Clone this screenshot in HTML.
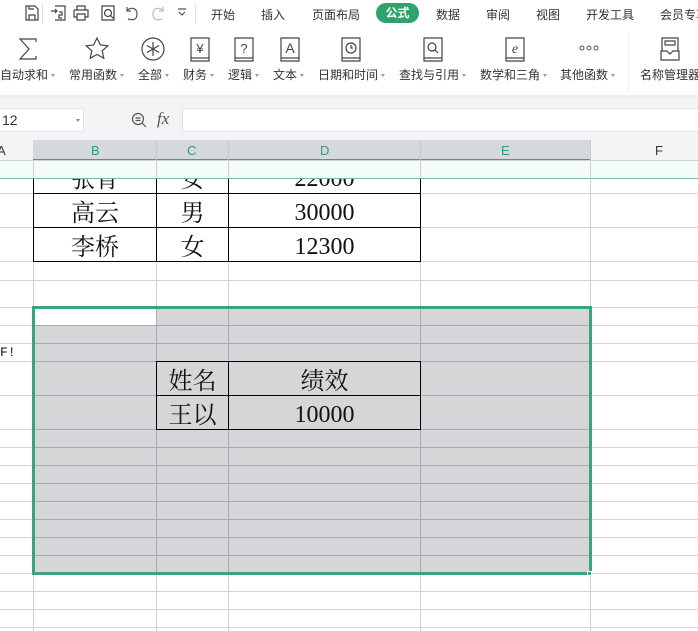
<!DOCTYPE html>
<html><head><meta charset="utf-8">
<style>
*{margin:0;padding:0;box-sizing:border-box}
body{width:698px;height:631px;overflow:hidden;background:#fff;font-family:"Liberation Sans","Noto Sans CJK SC",sans-serif;position:relative;color:#333}
.a{position:absolute}
.tab{position:absolute;top:6px;font-size:12px;color:#333;white-space:nowrap}
.lbl{position:absolute;top:66px;font-size:12px;color:#333;white-space:nowrap}
.lbl i{display:inline-block;width:0;height:0;border-left:2.5px solid transparent;border-right:2.5px solid transparent;border-top:3px solid #999;margin-left:3px;vertical-align:middle}
.hl{position:absolute;height:1px;background:#d4d4d4}
.vl{position:absolute;width:1px;background:#d0d0d0}
.cell{position:absolute;border:1px solid #000;font-family:"Liberation Serif","Noto Serif CJK SC",serif;font-size:24px;color:#111;display:flex;align-items:center;justify-content:center;overflow:hidden}
.n{padding-top:6px}
svg{position:absolute;overflow:visible}
</style></head><body>
<!-- top bar -->
<div class="a" style="left:42px;top:4px;width:1px;height:20px;background:#e3e3e3"></div>
<svg style="left:24px;top:5px" width="16" height="16" fill="none" stroke="#444" stroke-width="1.2"><path d="M2 1h9l3 3v11H2z M5 15v-5h6v5 M5 1v3h5"/></svg>
<svg style="left:50px;top:5px" width="16" height="16" fill="none" stroke="#444" stroke-width="1.2"><path d="M5 1h10v14H5 M1 6h6 M5 4l2 2-2 2 M9 7h3v3h-3v3h3"/></svg>
<svg style="left:73px;top:5px" width="16" height="16" fill="none" stroke="#444" stroke-width="1.2"><path d="M4 5V1h8v4 M1 5h14v7h-3 M4 12H1V5 M4 9h8v6H4z"/></svg>
<svg style="left:100px;top:5px" width="16" height="16" fill="none" stroke="#444" stroke-width="1.2"><path d="M2 1h12v14H2z"/><circle cx="8" cy="8" r="3.5"/><path d="M10.5 10.5l3 3"/></svg>
<svg style="left:124px;top:5px" width="16" height="16" fill="none" stroke="#555" stroke-width="1.2"><path d="M3 2v4h4 M3 6c2-4 10-4 10 3s-6 6-9 5"/></svg>
<svg style="left:150px;top:5px" width="16" height="16" fill="none" stroke="#bbb" stroke-width="1.2"><path d="M13 2v4H9 M13 6c-2-4-10-4-10 3s6 6 9 5"/></svg>
<svg style="left:177px;top:8px" width="10" height="10" fill="none" stroke="#555" stroke-width="1.2"><path d="M1 1h8 M2 4l3 3 3-3"/></svg>
<div class="a" style="left:195px;top:4px;width:1px;height:20px;background:#e3e3e3"></div>
<div class="tab" style="left:211px">开始</div>
<div class="tab" style="left:261px">插入</div>
<div class="tab" style="left:312px">页面布局</div>
<div class="a" style="left:376px;top:3px;width:43px;height:20px;border-radius:10px;background:#2da46b;color:#fff;font-size:12px;font-weight:bold;text-align:center;line-height:20px">公式</div>
<div class="tab" style="left:436px">数据</div>
<div class="tab" style="left:486px">审阅</div>
<div class="tab" style="left:536px">视图</div>
<div class="tab" style="left:586px">开发工具</div>
<div class="tab" style="left:660px">会员专享</div>
<!-- ribbon icons -->
<svg style="left:18px;top:38px" width="20" height="22" fill="none" stroke="#444" stroke-width="1.2"><path d="M18 4V1H2l9 10-9 10h16v-3"/></svg>
<svg style="left:85px;top:37px" width="24" height="24" fill="none" stroke="#444" stroke-width="1.2"><path d="M12 1l3.3 7 7.5.8-5.6 5 1.6 7.4L12 17.5l-6.8 3.7 1.6-7.4-5.6-5 7.5-.8z"/></svg>
<svg style="left:141px;top:37px" width="24" height="24" fill="none" stroke="#444" stroke-width="1.2"><circle cx="12" cy="12" r="11"/><path d="M12 5v14 M6 8.5l12 7 M18 8.5l-12 7"/></svg>
<svg style="left:190px;top:37px" width="20" height="26" fill="none" stroke="#444" stroke-width="1.2"><path d="M1 1h18v20H1z M1 21v3h18v-3"/><text x="10" y="16" font-size="13" fill="#444" stroke="none" text-anchor="middle" font-family="Liberation Sans">¥</text></svg>
<svg style="left:234px;top:37px" width="20" height="26" fill="none" stroke="#444" stroke-width="1.2"><path d="M1 1h18v20H1z M1 21v3h18v-3"/><text x="10" y="16" font-size="13" fill="#444" stroke="none" text-anchor="middle" font-family="Liberation Sans">?</text></svg>
<svg style="left:280px;top:37px" width="20" height="26" fill="none" stroke="#444" stroke-width="1.2"><path d="M1 1h18v20H1z M1 21v3h18v-3"/><text x="10" y="16" font-size="14" fill="#444" stroke="none" text-anchor="middle" font-family="Liberation Sans">A</text></svg>
<svg style="left:341px;top:37px" width="20" height="26" fill="none" stroke="#444" stroke-width="1.2"><path d="M1 1h18v20H1z M1 21v3h18v-3"/><circle cx="10" cy="11" r="5"/><path d="M10 8v3h2"/></svg>
<svg style="left:423px;top:37px" width="20" height="26" fill="none" stroke="#444" stroke-width="1.2"><path d="M1 1h18v20H1z M1 21v3h18v-3"/><circle cx="9" cy="10" r="4"/><path d="M12 13l3 3"/></svg>
<svg style="left:505px;top:37px" width="20" height="26" fill="none" stroke="#444" stroke-width="1.2"><path d="M1 1h18v20H1z M1 21v3h18v-3"/><text x="10" y="16" font-size="14" fill="#444" stroke="none" text-anchor="middle" font-style="italic" font-family="Liberation Serif">e</text></svg>
<svg style="left:579px;top:45px" width="20" height="6" fill="none" stroke="#555" stroke-width="1"><circle cx="3" cy="3" r="2"/><circle cx="10" cy="3" r="2"/><circle cx="17" cy="3" r="2"/></svg>
<div class="a" style="left:628px;top:32px;width:1px;height:60px;background:#eee"></div>
<svg style="left:660px;top:37px" width="20" height="24" fill="none" stroke="#444" stroke-width="1.2"><path d="M2 14V1h16v13 M1 14h6l3 3 3-3h6v9H1z M5 4h10v4H5z"/></svg>
<div class="lbl" style="left:0px">自动求和<i></i></div>
<div class="lbl" style="left:69px">常用函数<i></i></div>
<div class="lbl" style="left:138px">全部<i></i></div>
<div class="lbl" style="left:183px">财务<i></i></div>
<div class="lbl" style="left:228px">逻辑<i></i></div>
<div class="lbl" style="left:273px">文本<i></i></div>
<div class="lbl" style="left:318px">日期和时间<i></i></div>
<div class="lbl" style="left:399px">查找与引用<i></i></div>
<div class="lbl" style="left:480px">数学和三角<i></i></div>
<div class="lbl" style="left:560px">其他函数<i></i></div>
<div class="lbl" style="left:640px">名称管理器</div>
<!-- formula bar -->
<div class="a" style="left:0;top:95px;width:698px;height:45px;background:#f3f4f6"></div>
<div class="a" style="left:0;top:95px;width:698px;height:3px;background:#eceef0"></div>
<div class="a" style="left:-2px;top:108px;width:86px;height:24px;background:#fff;border:1px solid #e2e2e2;border-radius:2px;font-size:14px;line-height:22px;padding-left:3px;color:#333">12</div>
<div class="a" style="left:76px;top:119px;border-left:2.5px solid transparent;border-right:2.5px solid transparent;border-top:3px solid #888"></div>
<svg style="left:131px;top:112px" width="16" height="16" fill="none" stroke="#555" stroke-width="1.2"><circle cx="7" cy="7" r="5.5"/><path d="M4.5 6h5 M4.5 8.5h5 M11 11l4 4"/></svg>
<div class="a" style="left:157px;top:109px;font-family:'Liberation Serif',serif;font-style:italic;font-size:17px;color:#555">fx</div>
<div class="a" style="left:182px;top:108px;width:520px;height:24px;background:#fff;border:1px solid #e2e2e2;border-radius:2px"></div>
<!-- headers -->
<div class="a" style="left:0;top:140px;width:698px;height:21px;background:#f3f4f6"></div>
<div class="a" style="left:33px;top:140px;width:557px;height:21px;background:#d5d8dd"></div>
<div class="a" style="left:33px;top:159px;width:557px;height:2px;background:#37a47a"></div>
<div class="a" style="left:0;top:160px;width:698px;height:1px;background:#d0d0d0"></div>
<div class="a" style="left:-3px;top:143px;font-size:13px;color:#333">A</div>
<div class="a" style="left:91px;top:143px;font-size:13px;color:#2e9e6c">B</div>
<div class="a" style="left:187px;top:143px;font-size:13px;color:#2e9e6c">C</div>
<div class="a" style="left:320px;top:143px;font-size:13px;color:#2e9e6c">D</div>
<div class="a" style="left:501px;top:143px;font-size:13px;color:#2e9e6c">E</div>
<div class="a" style="left:655px;top:143px;font-size:13px;color:#333">F</div>
<div class="a" style="left:156px;top:140px;width:1px;height:20px;background:#c6c9ce"></div>
<div class="a" style="left:228px;top:140px;width:1px;height:20px;background:#c6c9ce"></div>
<div class="a" style="left:420px;top:140px;width:1px;height:20px;background:#c6c9ce"></div>
<div class="a" style="left:590px;top:140px;width:1px;height:20px;background:#c6c9ce"></div>
<!-- grid -->
<div class="a" style="left:0;top:161px;width:698px;height:17px;background:#f4fcfa"></div>
<div class="a" style="left:0;top:178px;width:698px;height:1px;background:#7fb5a6"></div>
<div class="hl" style="left:0;top:193px;width:698px"></div>
<div class="hl" style="left:0;top:227px;width:698px"></div>
<div class="hl" style="left:0;top:261px;width:698px"></div>
<div class="hl" style="left:0;top:280px;width:698px"></div>
<div class="hl" style="left:0;top:307px;width:698px"></div>
<div class="hl" style="left:0;top:325px;width:698px"></div>
<div class="hl" style="left:0;top:343px;width:698px"></div>
<div class="hl" style="left:0;top:361px;width:698px"></div>
<div class="hl" style="left:0;top:395px;width:698px"></div>
<div class="hl" style="left:0;top:429px;width:698px"></div>
<div class="hl" style="left:0;top:447px;width:698px"></div>
<div class="hl" style="left:0;top:465px;width:698px"></div>
<div class="hl" style="left:0;top:483px;width:698px"></div>
<div class="hl" style="left:0;top:501px;width:698px"></div>
<div class="hl" style="left:0;top:519px;width:698px"></div>
<div class="hl" style="left:0;top:537px;width:698px"></div>
<div class="hl" style="left:0;top:555px;width:698px"></div>
<div class="hl" style="left:0;top:573px;width:698px"></div>
<div class="hl" style="left:0;top:591px;width:698px"></div>
<div class="hl" style="left:0;top:609px;width:698px"></div>
<div class="hl" style="left:0;top:627px;width:698px"></div>
<div class="vl" style="left:33px;top:161px;height:470px"></div>
<div class="vl" style="left:156px;top:161px;height:470px"></div>
<div class="vl" style="left:228px;top:161px;height:470px"></div>
<div class="vl" style="left:420px;top:161px;height:470px"></div>
<div class="vl" style="left:590px;top:161px;height:470px"></div>
<!-- selection -->
<div class="a" style="left:33px;top:307px;width:558px;height:267px;background:#d6d6d8;overflow:hidden">
 <div class="a" style="left:0;top:0;width:123px;height:18px;background:#fff"></div>
 <div class="a" style="left:0;top:18px;width:558px;height:1px;background:#a6a9bd"></div>
 <div class="a" style="left:0;top:36px;width:558px;height:1px;background:#a6a9bd"></div>
 <div class="a" style="left:0;top:54px;width:558px;height:1px;background:#a6a9bd"></div>
 <div class="a" style="left:0;top:88px;width:558px;height:1px;background:#a6a9bd"></div>
 <div class="a" style="left:0;top:122px;width:558px;height:1px;background:#a6a9bd"></div>
 <div class="a" style="left:0;top:140px;width:558px;height:1px;background:#a6a9bd"></div>
 <div class="a" style="left:0;top:158px;width:558px;height:1px;background:#a6a9bd"></div>
 <div class="a" style="left:0;top:176px;width:558px;height:1px;background:#a6a9bd"></div>
 <div class="a" style="left:0;top:194px;width:558px;height:1px;background:#a6a9bd"></div>
 <div class="a" style="left:0;top:212px;width:558px;height:1px;background:#a6a9bd"></div>
 <div class="a" style="left:0;top:230px;width:558px;height:1px;background:#a6a9bd"></div>
 <div class="a" style="left:0;top:248px;width:558px;height:1px;background:#a6a9bd"></div>
 <div class="a" style="left:123px;top:0;width:1px;height:267px;background:#a6a9bd"></div>
 <div class="a" style="left:195px;top:0;width:1px;height:267px;background:#a6a9bd"></div>
 <div class="a" style="left:387px;top:0;width:1px;height:267px;background:#a6a9bd"></div>
</div>
<div class="a" style="left:32px;top:306px;width:560px;height:269px;border:3px solid #3aa57a"></div>
<div class="a" style="left:587px;top:571px;width:5px;height:5px;background:#3aa57a;border:1px solid #fff"></div>
<div class="a" style="left:0;top:345px;font-family:'Liberation Mono',monospace;font-size:13px;color:#111">F!</div>
<!-- table 1 -->
<div class="a" style="left:33px;top:179px;width:388px;height:83px;overflow:hidden">
 <div class="cell" style="left:0;top:-20px;width:124px;height:35px">张青</div>
 <div class="cell" style="left:123px;top:-20px;width:73px;height:35px">女</div>
 <div class="cell n" style="left:195px;top:-20px;width:193px;height:35px">22000</div>
 <div class="cell" style="left:0;top:14px;width:124px;height:35px">高云</div>
 <div class="cell" style="left:123px;top:14px;width:73px;height:35px">男</div>
 <div class="cell n" style="left:195px;top:14px;width:193px;height:35px">30000</div>
 <div class="cell" style="left:0;top:48px;width:124px;height:35px">李桥</div>
 <div class="cell" style="left:123px;top:48px;width:73px;height:35px">女</div>
 <div class="cell n" style="left:195px;top:48px;width:193px;height:35px">12300</div>
</div>
<div class="a" style="left:33px;top:178px;width:388px;height:1px;background:#7fb5a6"></div>
<!-- table 2 -->
<div class="cell" style="left:156px;top:361px;width:73px;height:35px">姓名</div>
<div class="cell" style="left:228px;top:361px;width:193px;height:35px">绩效</div>
<div class="cell" style="left:156px;top:395px;width:73px;height:35px">王以</div>
<div class="cell n" style="left:228px;top:395px;width:193px;height:35px">10000</div>
</body></html>
